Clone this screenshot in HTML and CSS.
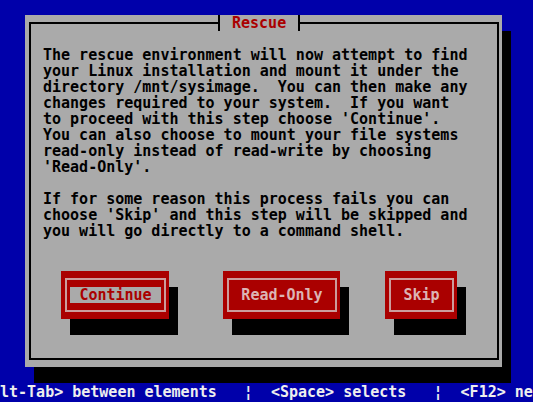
FILE: index.html
```html
<!DOCTYPE html>
<html lang="en">
  <head>
    <meta charset="UTF-8" />
    <meta name="viewport" content="width=device-width, initial-scale=1.0" />
    <title>Rescue</title>
    <link rel="stylesheet" href="styles.css">
  </head>
  <body>
    <div class="screen">
      <div class="desk">
        <div class="window">
          <div class="frame">
            <div class="title">Rescue</div>
            <div class="message">
              <p>The rescue environment will now attempt to find
your Linux installation and mount it under the
directory /mnt/sysimage.  You can then make any
changes required to your system.  If you want
to proceed with this step choose 'Continue'.
You can also choose to mount your file systems
read-only instead of read-write by choosing
'Read-Only'.</p>
              <p>If for some reason this process fails you can
choose 'Skip' and this step will be skipped and
you will go directly to a command shell.</p>
            </div>
            <div class="buttons">
              <div class="btn btn-continue btn-focus">
                <div class="btn-box"><span class="btn-label">Continue</span></div>
              </div>
              <div class="btn btn-readonly">
                <div class="btn-box"><span class="btn-label">Read-Only</span></div>
              </div>
              <div class="btn btn-skip">
                <div class="btn-box"><span class="btn-label">Skip</span></div>
              </div>
            </div>
          </div>
        </div>
      </div>
      <div class="helpline">lt-Tab&gt; between elements   &brvbar;  &lt;Space&gt; selects   &brvbar;  &lt;F12&gt; next screen</div>
    </div>
  </body>
</html>
```

FILE: styles.css
```css
body {
  margin: 0;
  background-color: #0000aa;
  font-family: "DejaVu Sans Mono", "Liberation Mono", monospace;
  font-weight: bold;
  font-size: 15px;
  line-height: 16px;
}

.screen {
  width: 533px;
  height: 402px;
  display: flex;
  flex-direction: column;
  overflow: hidden;
}

.desk {
  flex: 1;
  padding: 15px 0 0 25px;
}

.window {
  width: 477px;
  height: 352px;
  box-sizing: border-box;
  padding: 7px 3px 7px 4px;
  background-color: #aaaaaa;
  box-shadow: 9px 16px 0 #000;
  display: flex;
  flex-direction: column;
}

.frame {
  flex: 1;
  border: 2px solid #000;
  padding-left: 12px;
  display: flex;
  flex-direction: column;
}

.title {
  align-self: flex-start;
  height: 16px;
  margin: -9px 0 0 175px;
  padding: 0 12px;
  border-left: 2px solid #000;
  border-right: 2px solid #000;
  background-color: #aaaaaa;
  color: #aa0000;
}

.message {
  margin-top: 16px;
  color: #000;
}

.message p {
  margin: 0;
  white-space: pre;
}

.message p + p {
  margin-top: 16px;
}

.buttons {
  margin-top: 32px;
  padding-left: 18px;
  display: flex;
}

.btn {
  height: 48px;
  box-sizing: border-box;
  padding: 7px 3px 7px 4px;
  background-color: #aa0000;
  box-shadow: 9px 16px 0 #000;
  display: flex;
}

.btn-continue {
  width: 108px;
}

.btn-readonly {
  width: 117px;
  margin-left: 54px;
}

.btn-skip {
  width: 72px;
  margin-left: 45px;
}

.btn-box {
  flex: 1;
  border: 2px solid #cc9c9c;
  display: flex;
  align-items: center;
  justify-content: center;
}

.btn-label {
  padding: 0 9px;
  height: 16px;
  color: #dcb4b4;
}

.btn-focus .btn-label {
  background-color: #aaaaaa;
  color: #aa0000;
}

.helpline {
  height: 19px;
  box-sizing: border-box;
  padding-top: 1px;
  color: #eeeeee;
  white-space: pre;
  overflow: hidden;
}
```
